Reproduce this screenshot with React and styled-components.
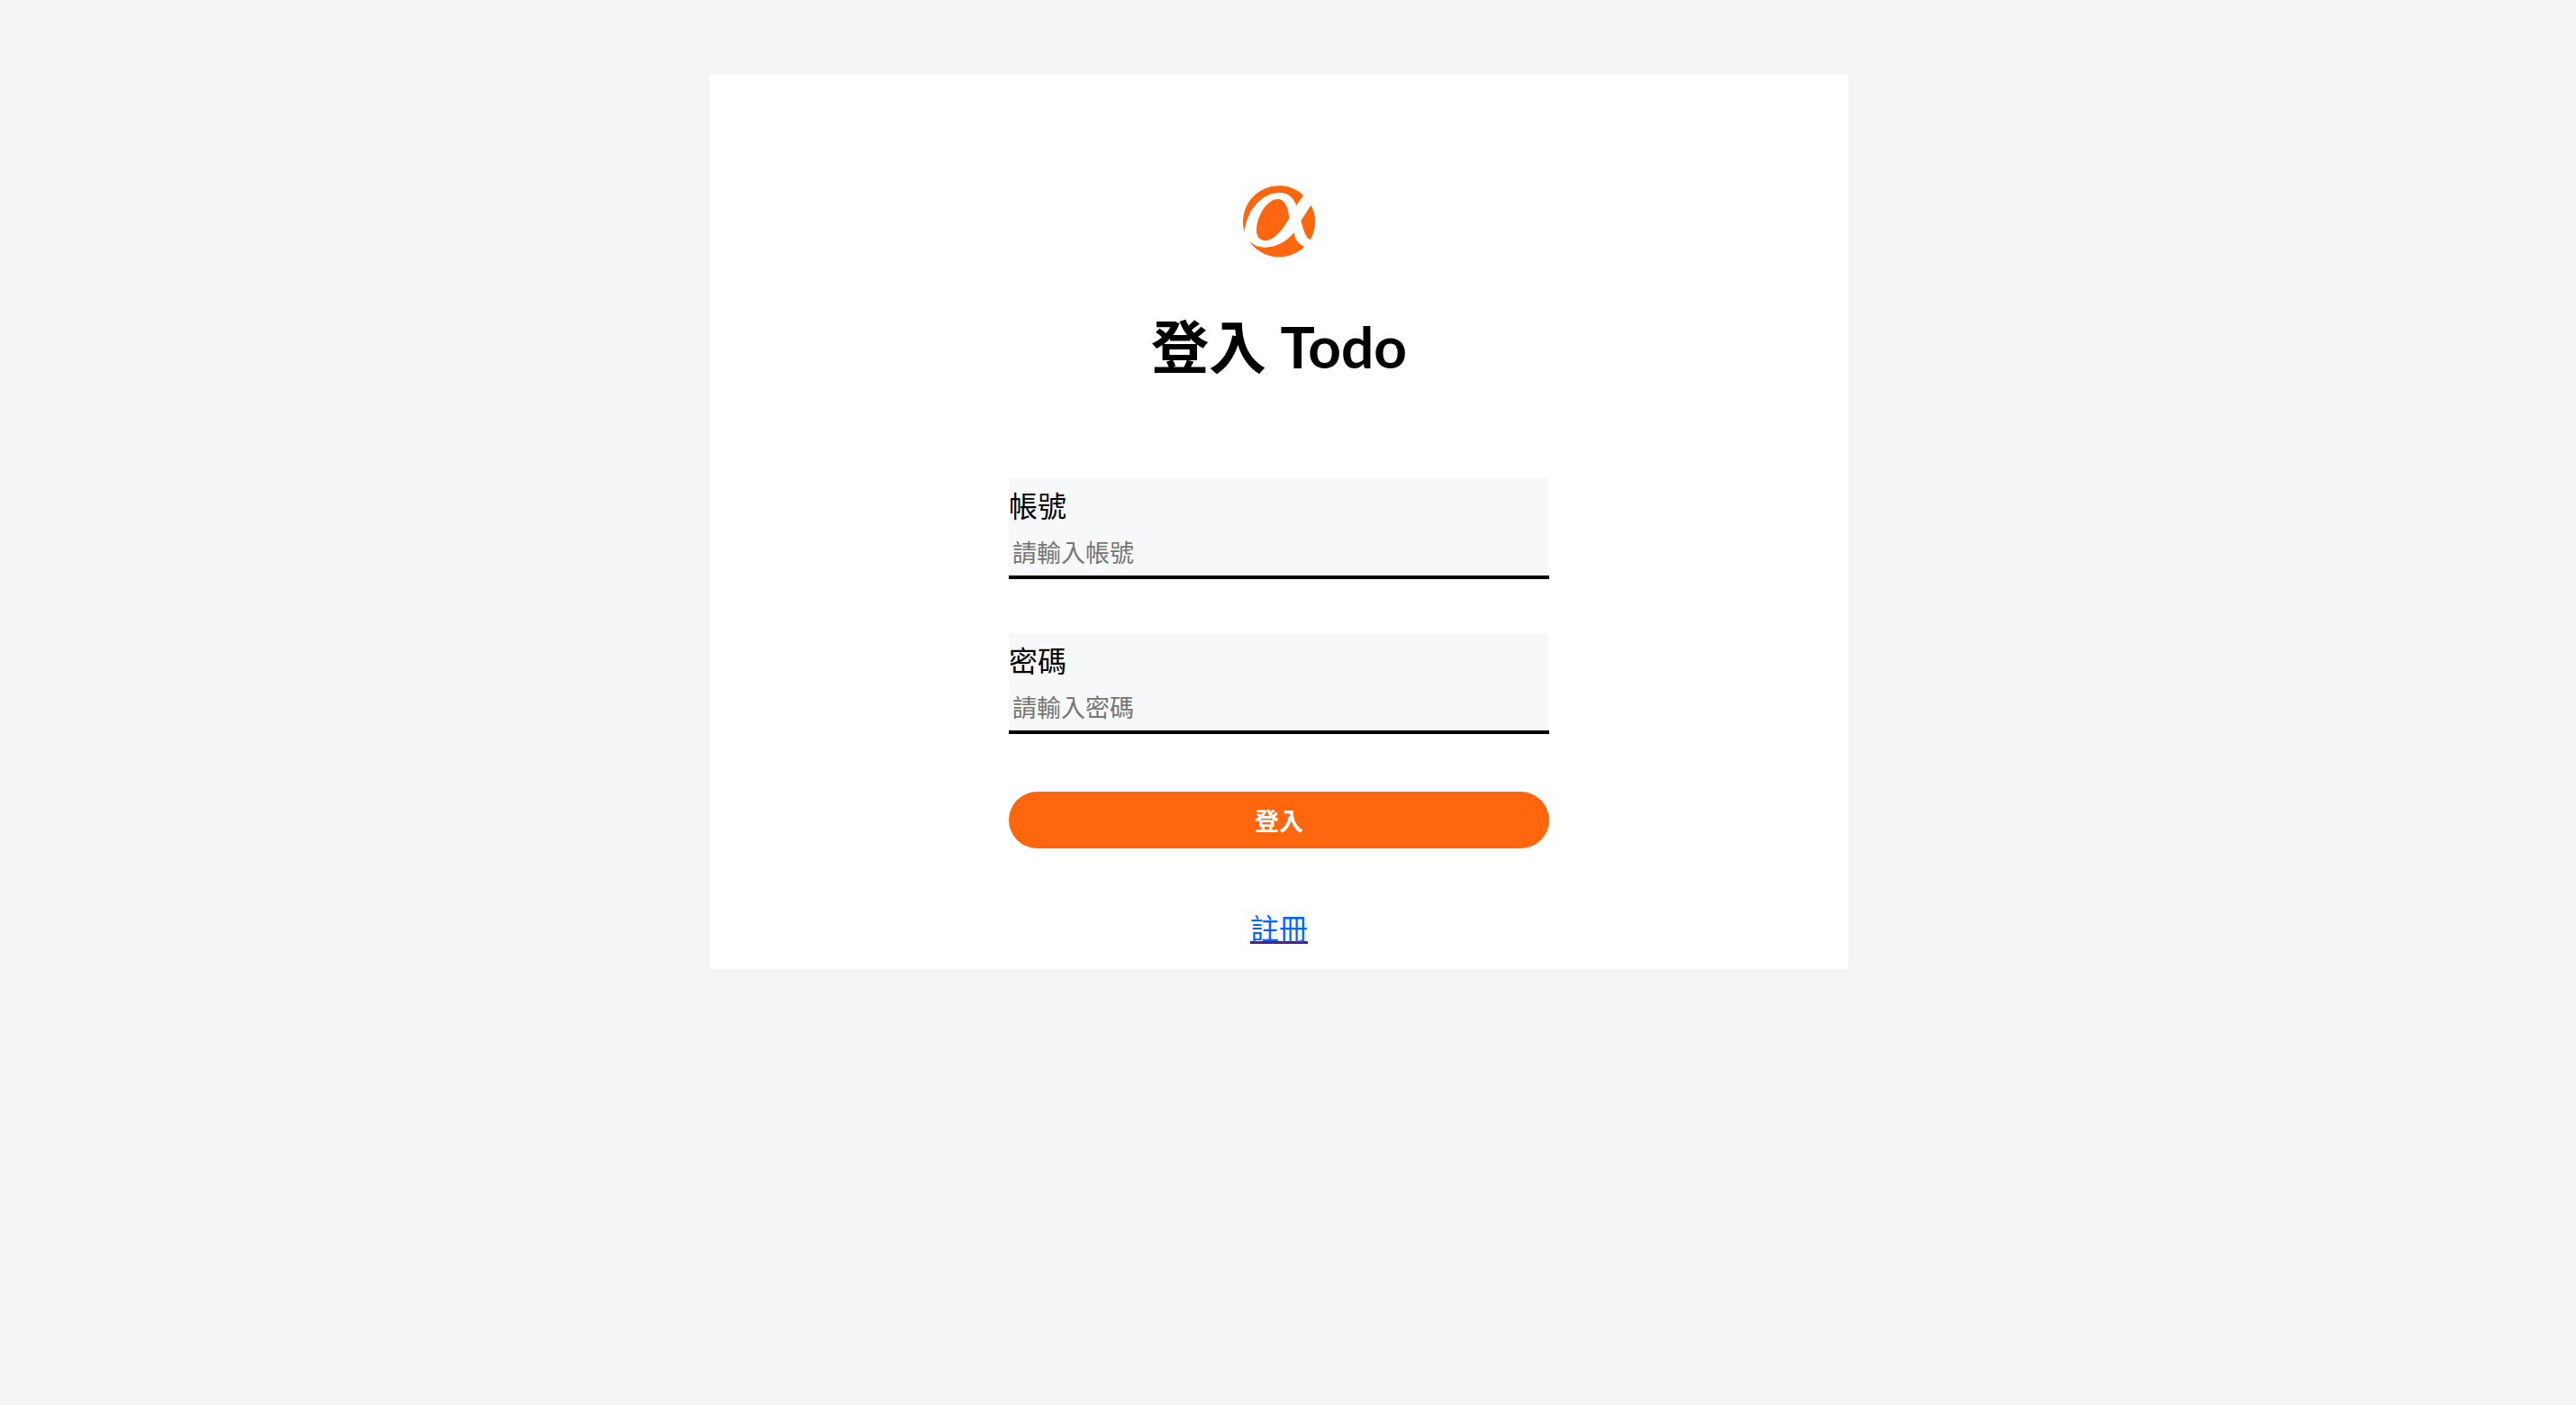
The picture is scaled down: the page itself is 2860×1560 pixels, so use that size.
import React, { useState } from "react";
import styled, { createGlobalStyle } from "styled-components";

const GlobalStyle = createGlobalStyle`
  * {
    box-sizing: border-box;
  }
  body {
    margin: 0;
    background: #f4f4f4;
    color: #000;
    font-family: Lato, "Noto Sans CJK TC", sans-serif;
    font-size: 32px;
  }
`;

const Page = styled.main`
  display: flex;
  justify-content: center;
  padding: 82px 20px 82px 0;
`;

const Card = styled.section`
  display: flex;
  flex-direction: column;
  align-items: center;
  width: 100%;
  max-width: 1264px;
  padding: 124px 24px 20px;
  background: #fff;
`;

const Logo = styled.svg`
  width: 80px;
  height: 80px;
  fill: #ff660e;
`;

const Title = styled.h1`
  margin: 52px 0 100px;
  font-size: 64px;
  font-weight: 700;
  line-height: 93px;
`;

const Form = styled.form`
  display: flex;
  flex-direction: column;
  width: 100%;
  max-width: 600px;
`;

const FieldBox = styled.div`
  display: flex;
  flex-direction: column;
  gap: 4px;
  margin-bottom: 60px;
  padding: 8px 0 2px;
  background: #f7f8fa;
  border-bottom: 4px solid #000;
`;

const Label = styled.label`
  line-height: 46px;
`;

const Input = styled.input`
  width: 100%;
  height: 48px;
  padding: 2px 4px;
  border: 0;
  outline: none;
  background: transparent;
  font-family: inherit;
  font-size: 27px;

  &::placeholder {
    color: #757575;
  }
`;

const SubmitButton = styled.button`
  height: 63px;
  margin: 4px 0 64px;
  border: 0;
  border-radius: 32px;
  background: #ff660e;
  color: #fff;
  font-family: inherit;
  font-size: 27px;
  font-weight: 700;
  cursor: pointer;
`;

const RegisterLink = styled.a`
  color: #0066ff;
  line-height: 50px;
  text-decoration: underline #551a8b 3px;
  text-decoration-skip-ink: none;
`;

function Field({ id, label, type, placeholder }) {
  const [value, setValue] = useState("");
  return (
    <FieldBox>
      <Label htmlFor={id}>{label}</Label>
      <Input
        id={id}
        type={type}
        placeholder={placeholder}
        value={value}
        onChange={(event) => setValue(event.target.value)}
      />
    </FieldBox>
  );
}

export default function App() {
  return (
    <>
      <GlobalStyle />
      <Page>
        <Card>
          <Logo viewBox="0 0 240 240" aria-hidden="true">
            <path d="M201 32A120 120 0 0 0 5 155C12 82 62 24 122 24C154 24 169 43 178 67Z" />
            <path d="M116 45C140 45 149 72 154 109C134 144 105 183 75 183C55 183 45 170 45 150C45 100 82 45 116 45Z" />
            <path d="M227 65L193 117C200 143 208 174 224 181A120 120 0 0 0 227 65Z" />
            <path d="M20 184A120 120 0 0 0 205 203C184 196 173 181 170 157C145 186 113 206 73 206C50 206 34 198 20 184Z" />
          </Logo>
          <Title>登入 Todo</Title>
          <Form onSubmit={(event) => event.preventDefault()}>
            <Field id="account" label="帳號" type="text" placeholder="請輸入帳號" />
            <Field id="password" label="密碼" type="password" placeholder="請輸入密碼" />
            <SubmitButton type="submit">登入</SubmitButton>
          </Form>
          <RegisterLink href="#signup">註冊</RegisterLink>
        </Card>
      </Page>
    </>
  );
}
